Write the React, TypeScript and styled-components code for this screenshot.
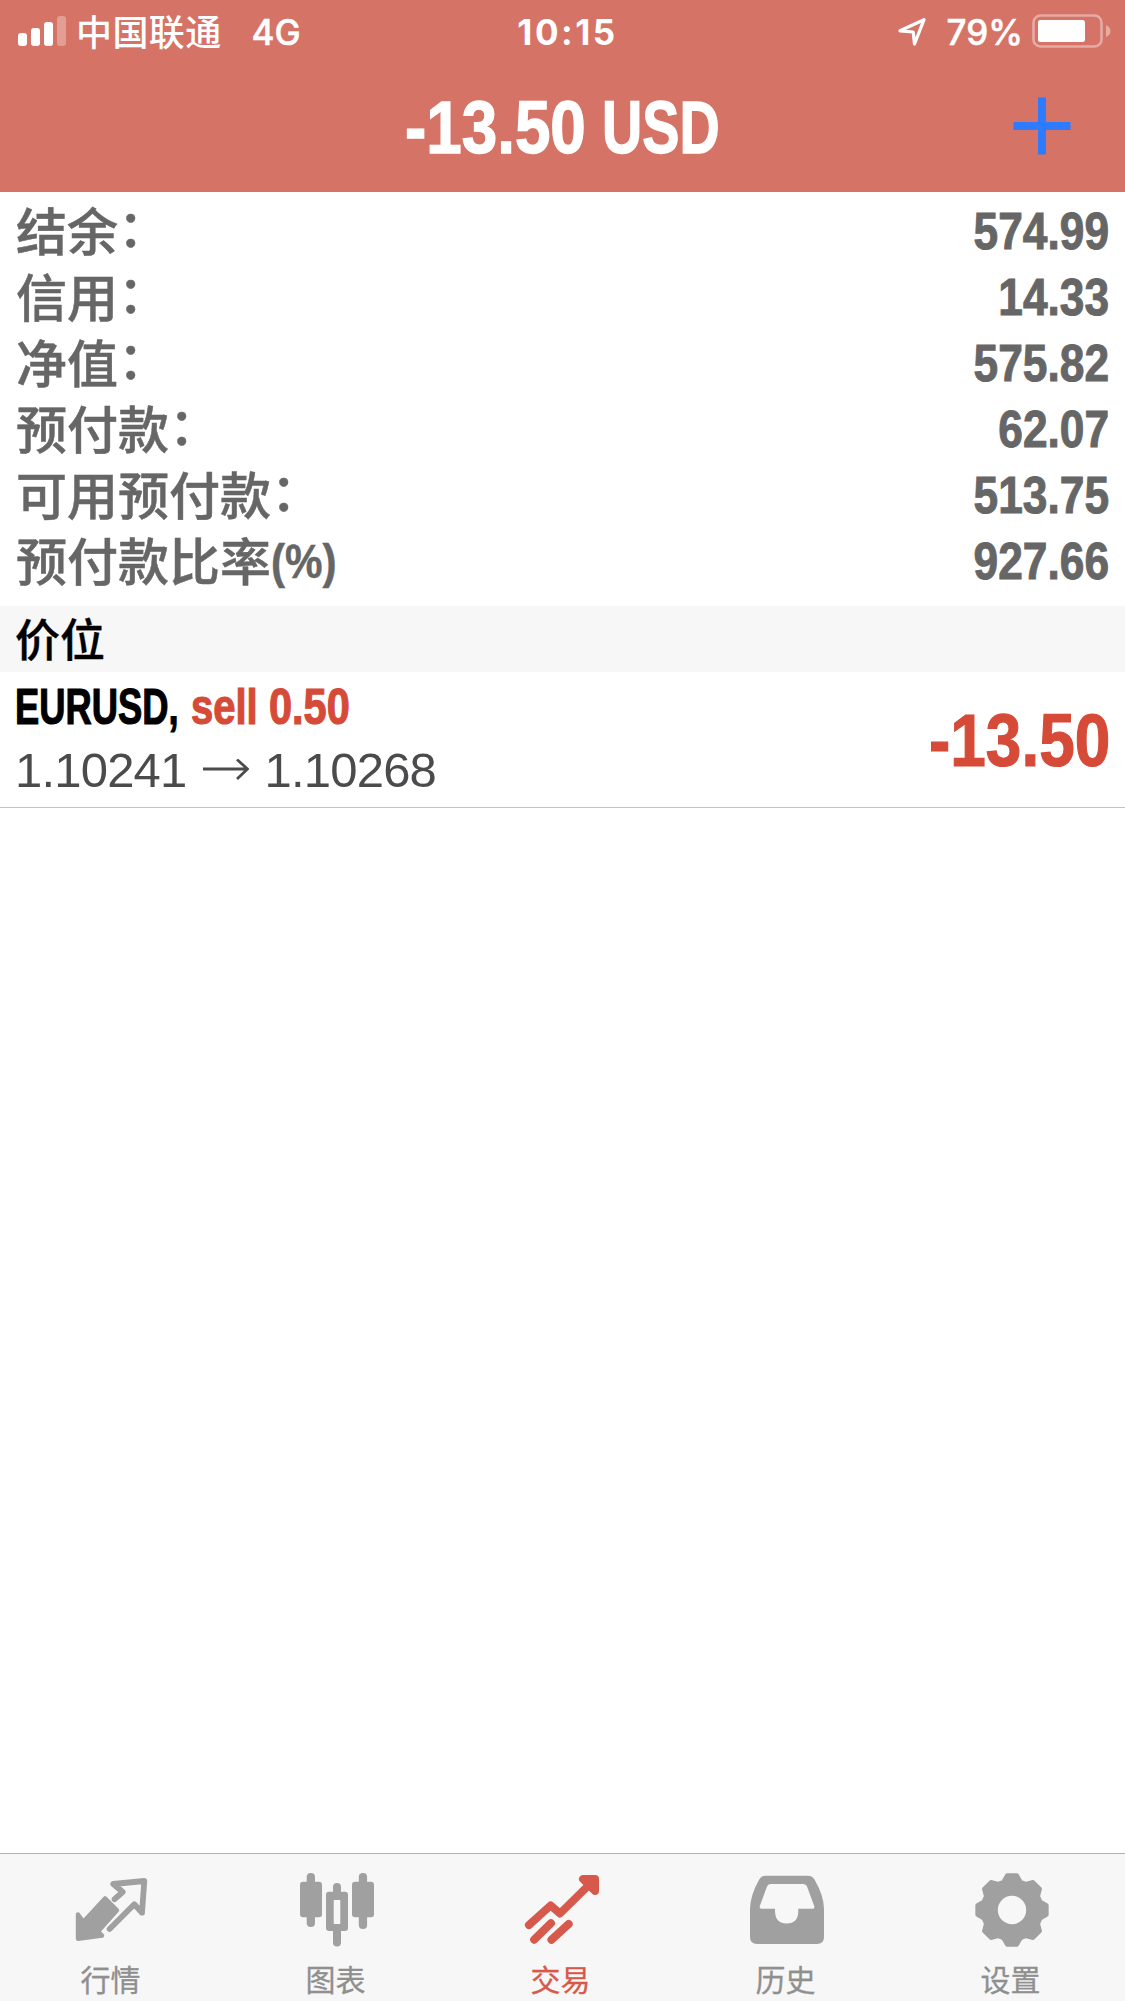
import React from "react";
import styled, { createGlobalStyle } from "styled-components";

const cjk = `"Noto Sans CJK SC", sans-serif`;
const grotesque = `"Liberation Sans", ${cjk}`;

const GlobalStyle = createGlobalStyle`
  * { box-sizing: border-box; }
  body { margin: 0; background: #fff; }
`;

const Screen = styled.div`
  width: 1125px;
  height: 2001px;
  display: flex;
  flex-direction: column;
  background: #fff;
  overflow: hidden;
`;

/* Text squeezed horizontally; $width is the room it takes once squeezed. */
const Condensed = styled.span<{ $scale: number; $width: number }>`
  display: inline-block;
  white-space: nowrap;
  width: ${(p) => p.$width}px;
  transform: scaleX(${(p) => p.$scale});
  transform-origin: left center;
`;

const Header = styled.header`
  height: 192px;
  background: #d67367;
  color: #fff;
  display: flex;
  flex-direction: column;
`;

const StatusBar = styled.div`
  height: 60px;
  padding: 0 14px 0 18px;
  display: grid;
  grid-template-columns: 1fr auto 1fr;
  align-items: center;
  font: 600 35px/60px Inter, ${cjk};
`;

const StatusGroup = styled.div<{ $end?: boolean }>`
  display: flex;
  align-items: center;
  height: 60px;
  justify-content: ${(p) => (p.$end ? "flex-end" : "flex-start")};
`;

const Carrier = styled.span`
  margin-left: 10px;
  padding-bottom: 2px;
  font: 500 36px/58px ${cjk};
  letter-spacing: 0.4px;
`;

const Network = styled.span`
  margin-left: 30px;
  padding-top: 2px;
  font-weight: 500;
  -webkit-text-stroke: 0.5px currentColor;
`;

const Clock = styled.time`
  font-weight: 700;
  letter-spacing: 2.5px;
  padding: 2px 0 0 6px;
`;

const Charge = styled.span`
  margin: 0 9px 0 20px;
  padding-top: 2px;
  font-weight: 500;
  -webkit-text-stroke: 0.5px currentColor;
`;

const TitleBar = styled.div`
  height: 132px;
  padding-right: 54px;
  display: grid;
  grid-template-columns: 1fr auto 1fr;
  align-items: center;
`;

const Title = styled.h1`
  grid-column: 2;
  margin: 0;
  padding: 3px 0 0 54px;
  display: flex;
  gap: 16px;
  font: 700 74.5px/129px ${grotesque};
  -webkit-text-stroke: 1.4px currentColor;
`;

const AddButton = styled.button`
  justify-self: end;
  padding: 0;
  border: 0;
  background: none;
  height: 58px;
  width: 58px;
`;

const Summary = styled.dl`
  margin: 0;
  height: 414px;
  padding: 5px 16px 0;
`;

const SummaryRow = styled.div`
  height: 66px;
  display: flex;
  justify-content: space-between;
  align-items: center;
  color: #666;
`;

const Label = styled.dt`
  display: flex;
  align-items: center;
  padding-bottom: 1px;
  font: 500 51px/65px ${cjk};
  -webkit-text-stroke: 0.5px currentColor;
`;

const Colon = styled.span`
  padding-bottom: 8px;
  line-height: 57px;
`;

const Unit = styled(Condensed)`
  padding-top: 2px;
  font: 700 49px/60px ${grotesque};
`;

const Value = styled.dd`
  margin: 0;
  padding-top: 3px;
  font: 700 52px/63px ${grotesque};
  -webkit-text-stroke: 1px currentColor;
  transform: scaleX(0.852);
  transform-origin: right center;
`;

const SectionHeader = styled.h2`
  margin: 0;
  height: 66px;
  padding: 0 15px;
  background: #f7f7f7;
  color: #000;
  font: 500 45px/64px ${cjk};
  -webkit-text-stroke: 0.4px currentColor;
`;

const Position = styled.article`
  height: 136px;
  padding: 0 15px;
  border-bottom: 1px solid #c2c4c4;
  display: flex;
  justify-content: space-between;
  align-items: center;
`;

const PositionInfo = styled.div`
  display: flex;
  flex-direction: column;
  padding-bottom: 5px;
`;

const Instrument = styled.div`
  display: flex;
  font: 700 50px/66px ${grotesque};
  -webkit-text-stroke: 1.2px currentColor;
  color: #000;
`;

const Side = styled.span`
  display: flex;
  gap: 10px;
  margin-left: 11px;
  color: #d64a38;
`;

const Prices = styled.div`
  display: flex;
  align-items: center;
  gap: 16px;
  font: 400 49px/60px "Liberation Sans", sans-serif;
  letter-spacing: -0.8px;
  color: #4b4b4d;
`;

const Profit = styled.div`
  font: 700 74.5px/100px ${grotesque};
  color: #d64a38;
  padding-top: 3px;
  -webkit-text-stroke: 1.2px currentColor;
  transform: scaleX(0.858);
  transform-origin: right center;
`;

const Blank = styled.main`
  flex: 1;
`;

const TabBar = styled.nav`
  height: 148px;
  border-top: 1px solid #b0b0b0;
  background: #f7f7f7;
  display: grid;
  grid-template-columns: repeat(5, 225px);
`;

const Tab = styled.a<{ $active?: boolean }>`
  display: flex;
  flex-direction: column;
  align-items: center;
  padding-top: 16px;
  color: ${(p) => (p.$active ? "#d6594b" : "#a0a0a0")};
`;

const TabIcon = styled.svg`
  width: 101px;
  height: 80px;
  display: block;
`;

const TabLabel = styled.span<{ $active?: boolean }>`
  font: 400 30px/44px ${cjk};
  padding-right: 4px;
  margin-top: 6px;
  -webkit-text-stroke: 0.3px currentColor;
  color: ${(p) => (p.$active ? "#d6594b" : "#8f8f8f")};
`;

const gearPoints = Array.from({ length: 8 }, (_, tooth) =>
  [
    [-17, 29.5],
    [-8, 35],
    [8, 35],
    [17, 29.5],
  ].map(([offset, radius]) => {
    const angle = ((tooth * 45 + offset) * Math.PI) / 180;
    return `${(50 + radius * Math.sin(angle)).toFixed(2)},${(40 - radius * Math.cos(angle)).toFixed(2)}`;
  })
)
  .flat()
  .join(" ");

const icons = {
  quotes: (
    <>
      <path
        d="M16 44.5 L21.3 52 L43 28.4 L55 40.3 L36 61.5 L40 65.6 L16 68.8Z"
        fill="currentColor"
        stroke="currentColor"
        strokeWidth="4.4"
        strokeLinejoin="round"
      />
      <path
        d="M52.6 29.2 L60.7 22 L51.3 14 L82.3 11 L80 42.7 L72.3 34.3 L47.6 59"
        fill="none"
        stroke="currentColor"
        strokeWidth="5.8"
        strokeLinejoin="round"
        strokeLinecap="round"
      />
    </>
  ),
  charts: (
    <g fill="currentColor">
      <rect x="13" y="11.7" width="22" height="35.5" rx="3" />
      <rect x="19.7" y="3" width="8.3" height="54" rx="4" />
      <rect x="65" y="11.7" width="22" height="35.5" rx="3" />
      <rect x="71.8" y="3" width="8.3" height="56" rx="4" />
      <path
        fillRule="evenodd"
        d="M42 21.7h4V17a4 4 0 0 1 8 0v4.7h4a3 3 0 0 1 3 3V58a3 3 0 0 1-3 3h-4v11.5a4 4 0 0 1-8 0V61h-4a3 3 0 0 1-3-3V24.7a3 3 0 0 1 3-3ZM46.7 30v24h6.6V30Z"
      />
    </g>
  ),
  trade: (
    <g fill="none" stroke="currentColor" strokeWidth="8" strokeLinecap="round" strokeLinejoin="round">
      <path d="M17 55 L38.7 35.4 L48 43.5 L82 10" />
      <path d="M71 9 H83 V21Z" fill="currentColor" />
      <path d="M22.2 69.7 L39 53.2M39.5 69.7 L56.7 54" />
    </g>
  ),
  history: (
    <path
      fill="currentColor"
      fillRule="evenodd"
      d="M28.5 5.7 H71 Q75.3 5.7 77.5 9.5 Q87 26 87 39 V67 Q87 74 80 74 H20 Q13 74 13 67 V39 Q13 26 22.2 9.5 Q24.2 5.7 28.5 5.7ZM33.5 14 Q31 14 30 16.5 L22.8 36 Q22.2 38.7 24.5 38.7 H38 V41.5 Q38.5 53.5 49.6 53.5 Q61 53.5 61.3 41.5 V38.7 H75.5 Q78 38.7 77.2 36 L70 16.5 Q69 14 66.5 14Z"
    />
  ),
  settings: (
    <>
      <polygon points={gearPoints} fill="currentColor" stroke="currentColor" strokeWidth="4" strokeLinejoin="round" />
      <circle cx="50" cy="40" r="14.2" fill="#f7f7f7" />
    </>
  ),
};

const tabs: { label: string; icon: keyof typeof icons; active?: boolean }[] = [
  { label: "行情", icon: "quotes" },
  { label: "图表", icon: "charts" },
  { label: "交易", icon: "trade", active: true },
  { label: "历史", icon: "history" },
  { label: "设置", icon: "settings" },
];

const summary: { name: string; value: string; unit?: string }[] = [
  { name: "结余", value: "574.99" },
  { name: "信用", value: "14.33" },
  { name: "净值", value: "575.82" },
  { name: "预付款", value: "62.07" },
  { name: "可用预付款", value: "513.75" },
  { name: "预付款比率", value: "927.66", unit: "(%)" },
];

export default function App() {
  return (
    <Screen>
      <GlobalStyle />
      <Header>
        <StatusBar>
          <StatusGroup>
            <svg width="48" height="30" fill="#fff">
              <rect y="17" width="9" height="13" rx="3" />
              <rect x="13" y="12" width="9" height="18" rx="3" />
              <rect x="26" y="6" width="9" height="24" rx="3" />
              <rect x="39" width="9" height="30" rx="3" opacity="0.3" />
            </svg>
            <Carrier>中国联通</Carrier>
            <Network>4G</Network>
          </StatusGroup>
          <Clock>10:15</Clock>
          <StatusGroup $end>
            <svg width="30" height="30" viewBox="0 0 30 30" fill="none" stroke="#fff" strokeWidth="3.2" strokeLinejoin="round">
              <path d="M3 14.8 L27 3.7 L17.5 28 L16.2 16Z" />
            </svg>
            <Charge>79%</Charge>
            <svg width="79" height="34" fill="none">
              <rect x="1.5" y="1.5" width="68" height="31" rx="7" stroke="#fff" strokeOpacity="0.4" strokeWidth="2.6" />
              <rect x="6" y="6" width="47" height="22" rx="2.5" fill="#fff" />
              <path d="M74 11 Q78.5 13 78.5 17 Q78.5 21 74 23Z" fill="#fff" fillOpacity="0.4" />
            </svg>
          </StatusGroup>
        </StatusBar>
        <TitleBar>
          <Title>
            <Condensed $scale={0.856} $width={181}>-13.50</Condensed>
            <Condensed $scale={0.748} $width={118}>USD</Condensed>
          </Title>
          <AddButton aria-label="+">
            <svg width="58" height="58" stroke="#2f7bff" strokeWidth="8" strokeLinecap="butt" display="block">
              <path d="M29 0.5V57.5M0.5 29H57.5" />
            </svg>
          </AddButton>
        </TitleBar>
      </Header>
      <Summary>
        {summary.map((row) => (
          <SummaryRow key={row.name}>
            <Label>
              {row.name}
              {row.unit ? (
                <Unit $scale={0.86} $width={66}>{row.unit}</Unit>
              ) : (
                <Colon>：</Colon>
              )}
            </Label>
            <Value>{row.value}</Value>
          </SummaryRow>
        ))}
      </Summary>
      <SectionHeader>价位</SectionHeader>
      <Position>
        <PositionInfo>
          <Instrument>
            <Condensed $scale={0.727} $width={165}>EURUSD,</Condensed>
            <Side>
              <Condensed $scale={0.8} $width={68}>sell</Condensed>
              <Condensed $scale={0.83} $width={82}>0.50</Condensed>
            </Side>
          </Instrument>
          <Prices>
            <span>1.10241</span>
            <svg width="46" height="22" fill="none" stroke="currentColor" strokeWidth="2.8">
              <path d="M0 10H44M34 0.5L44.5 10L34 20" />
            </svg>
            <span>1.10268</span>
          </Prices>
        </PositionInfo>
        <Profit>-13.50</Profit>
      </Position>
      <Blank />
      <TabBar>
        {tabs.map((tab) => (
          <Tab key={tab.label} $active={tab.active}>
            <TabIcon viewBox="0 0 101 80">{icons[tab.icon]}</TabIcon>
            <TabLabel $active={tab.active}>{tab.label}</TabLabel>
          </Tab>
        ))}
      </TabBar>
    </Screen>
  );
}
